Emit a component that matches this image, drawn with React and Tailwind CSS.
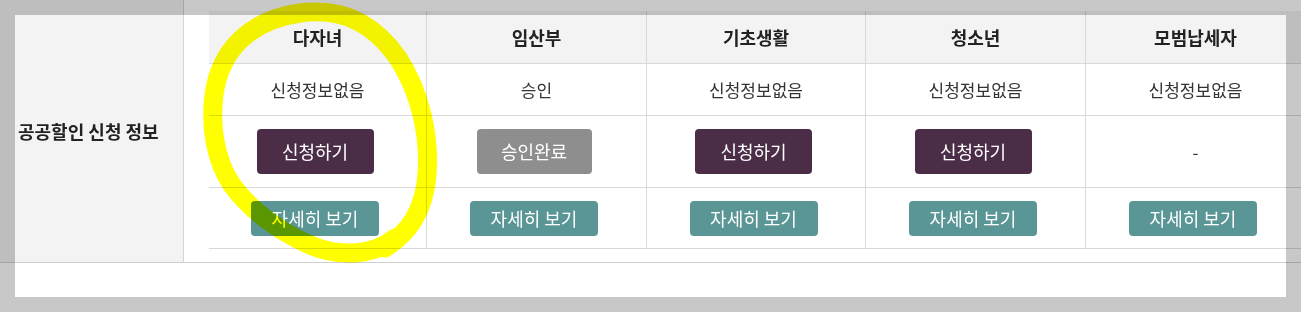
import React from 'react';

const columns = [
  { name: '다자녀', status: '신청정보없음', action: 'apply' },
  { name: '임산부', status: '승인', action: 'done' },
  { name: '기초생활', status: '신청정보없음', action: 'apply' },
  { name: '청소년', status: '신청정보없음', action: 'apply' },
  { name: '모범납세자', status: '신청정보없음', action: 'none' },
];

function ActionButton({ action }) {
  if (action === 'apply') {
    return (
      <button className="h-[45px] w-[117px] mr-[5px] rounded bg-[#4b2d48] text-white text-[18px]">
        신청하기
      </button>
    );
  }
  if (action === 'done') {
    return (
      <button className="h-[45px] w-[115px] mr-[5px] rounded bg-[#8e8e8e] text-white text-[18px]">
        승인완료
      </button>
    );
  }
  return <span className="text-[#333] text-[17px]">-</span>;
}

function Highlight() {
  return (
    <svg
      className="absolute left-0 top-0 pointer-events-none mix-blend-multiply"
      width="1301"
      height="312"
      viewBox="0 0 1301 312"
    >
      <path
        d="M 395 238 C 375 255, 340 258, 310 245 C 280 232, 250 210, 232 185 C 215 160, 210 125, 214 95 C 220 50, 250 20, 300 13 C 345 7, 375 25, 398 58 C 420 92, 430 135, 427 175 C 424 210, 410 232, 385 248"
        fill="none"
        stroke="#ffff00"
        strokeWidth="19"
        strokeLinecap="round"
        strokeLinejoin="round"
      />
    </svg>
  );
}

export default function App() {
  const cell = 'flex items-center justify-center border-r border-b border-[#d9d9d9]';
  return (
    <div className="relative w-[1301px] h-[312px] overflow-hidden bg-white font-['Noto_Sans_CJK_KR',sans-serif]">
      <div className="flex h-[263px] border-b border-[#d0d0d0]">
        <div className="w-[184px] shrink-0 flex items-center pl-[18px] bg-[#f3f3f3] border-r border-[#d4d4d4] text-[18px] font-bold text-[#222]">
          공공할인 신청 정보
        </div>
        <div className="pl-[25px] pt-[11px]">
          <div className="grid grid-cols-[218px_220px_219px_220px_220px] w-[1097px]">
            {columns.map((c) => (
              <div key={c.name + 'h'} className={cell + ' h-[53px] bg-[#f3f3f3] text-[18px] font-bold text-[#222]'}>
                {c.name}
              </div>
            ))}
            {columns.map((c) => (
              <div key={c.name + 's'} className={cell + ' h-[52px] text-[17px] text-[#333]'}>
                {c.status}
              </div>
            ))}
            {columns.map((c) => (
              <div key={c.name + 'a'} className={cell + ' h-[72px]'}>
                <ActionButton action={c.action} />
              </div>
            ))}
            {columns.map((c) => (
              <div key={c.name + 'd'} className={cell + ' h-[61px]'}>
                <button className="h-[35px] w-[128px] mr-[5px] rounded bg-[#5a9696] text-white text-[18px]">
                  자세히 보기
                </button>
              </div>
            ))}
          </div>
        </div>
      </div>
      <Highlight />
      <div className="absolute left-[15px] top-[15px] w-[1271px] h-[282px] pointer-events-none shadow-[0_0_0_2000px_rgba(0,0,0,0.216)]" />
    </div>
  );
}
